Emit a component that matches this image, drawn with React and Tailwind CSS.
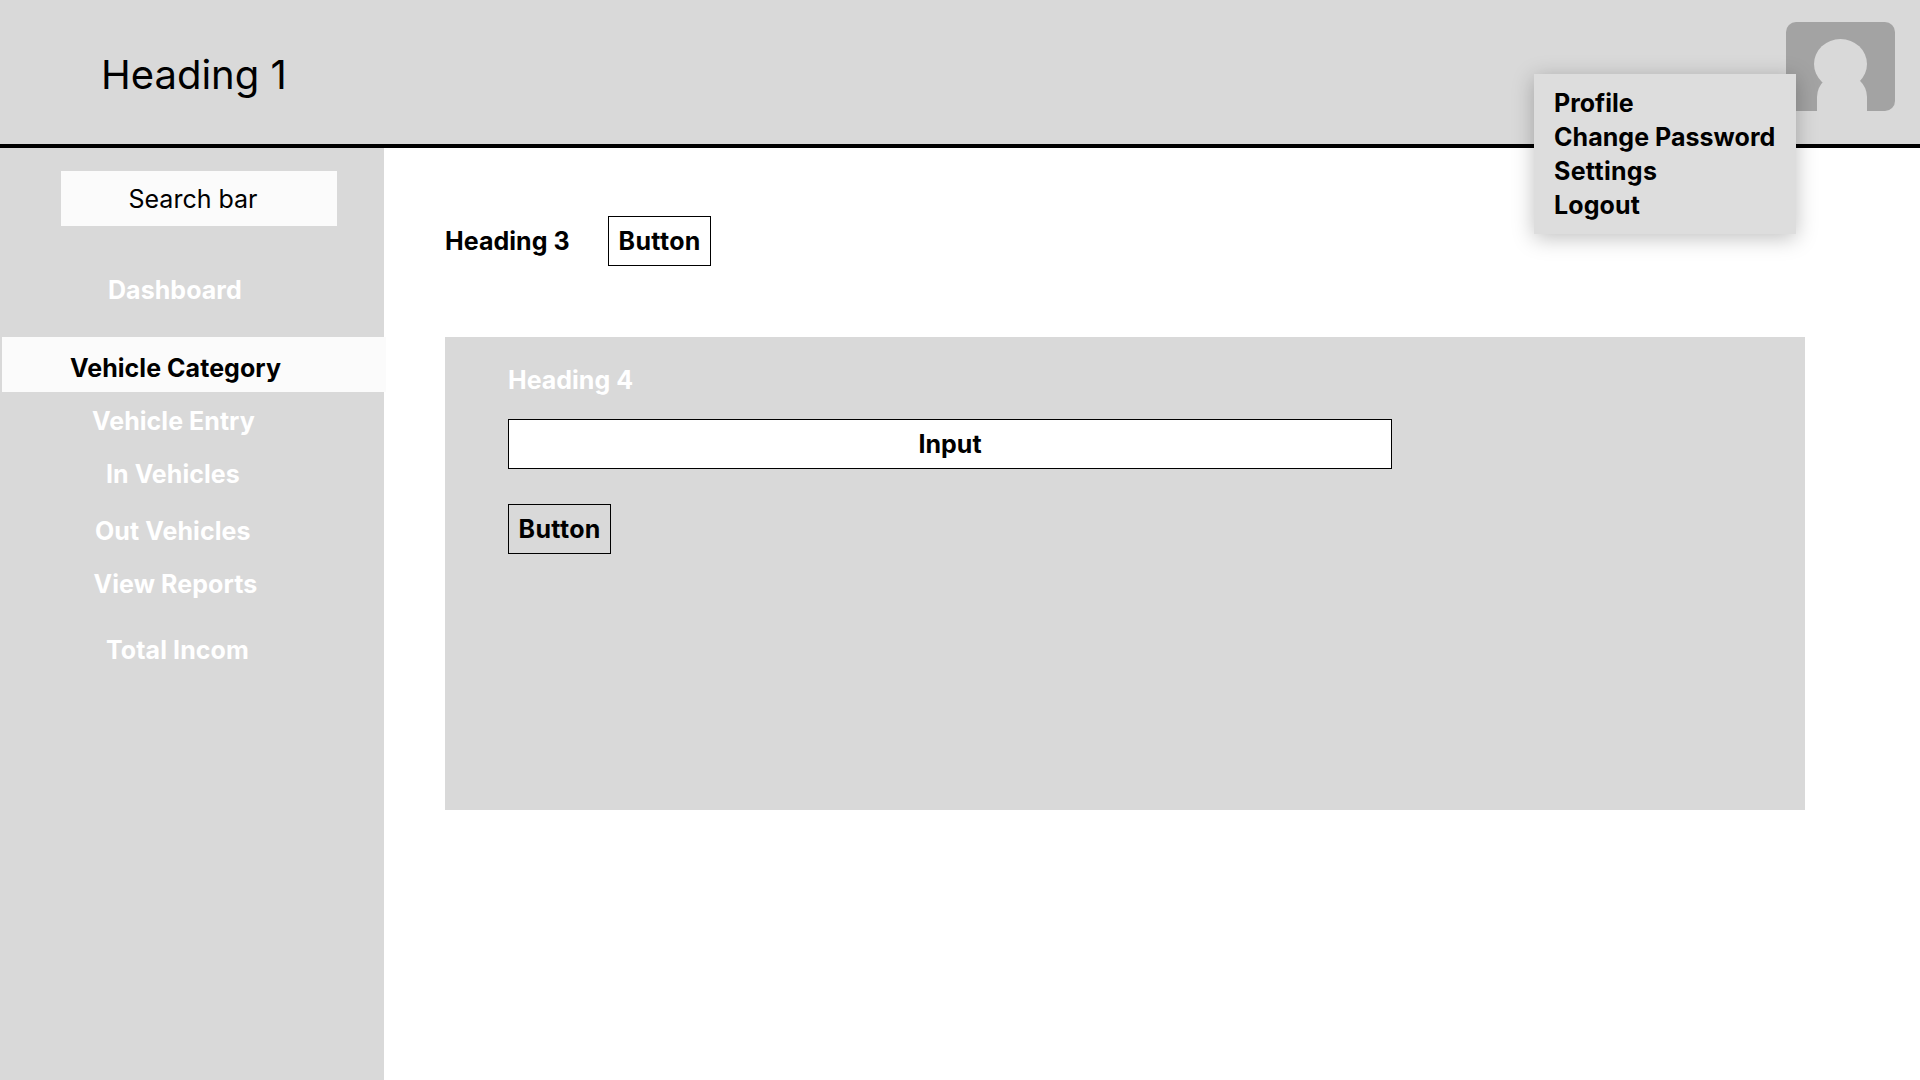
const navItems = [
  { label: 'Dashboard', className: 'mt-[49px] pl-[108px] tracking-[0.05px] text-white' },
  { label: 'Vehicle Category', className: 'mt-8 ml-0.5 -mr-0.5 h-[55px] bg-[#fbfbfb] pt-4 pl-[68px] tracking-[0.05px] text-black' },
  { label: 'Vehicle Entry', className: 'mt-3.5 pl-[92px] tracking-[0.05px] text-white' },
  { label: 'In Vehicles', className: 'mt-[23px] pl-[106px] tracking-[0.05px] text-white' },
  { label: 'Out Vehicles', className: 'mt-[27px] pl-[95px] tracking-[0.08px] text-white' },
  { label: 'View Reports', className: 'mt-[23px] pl-[93.5px] tracking-[0.08px] text-white' },
  { label: 'Total Incom', className: 'mt-9 pl-[106px] tracking-[0.08px] text-white' },
];

const menuItems = [
  { label: 'Profile', className: 'tracking-normal' },
  { label: 'Change Password', className: 'tracking-[0.04px]' },
  { label: 'Settings', className: 'tracking-[0.3px]' },
  { label: 'Logout', className: 'tracking-[0.1px]' },
];

function Avatar() {
  return (
    <svg className="block h-[89px] w-[109px]" viewBox="0 0 109 89" aria-label="Avatar">
      <rect width="109" height="89" rx="10" fill="#a3a3a3" />
      <ellipse cx="54.5" cy="42" rx="26.5" ry="25" fill="#d9d9d9" />
      <path d="M31 89V75a25 23.5 0 0 1 50 0V89Z" fill="#d9d9d9" />
    </svg>
  );
}

function UserMenu() {
  return (
    <ul className="absolute top-[74px] right-[124px] h-40 w-[262px] bg-[#dddddd] py-3 pl-5 leading-[34px] shadow-[0_4px_20px_rgba(0,0,0,0.25)]">
      {menuItems.map((item) => (
        <li key={item.label} className={item.className}>{item.label}</li>
      ))}
    </ul>
  );
}

function Button() {
  return (
    <button className="block h-[50px] w-[103px] border border-black pl-[9.5px] text-left tracking-[0.35px] whitespace-nowrap">Button</button>
  );
}

export default function App() {
  return (
    <div className="relative flex h-[1080px] w-[1920px] flex-col overflow-hidden bg-white font-['Inter',sans-serif] text-[25px] leading-[30px] font-bold text-black">
      <header className="flex h-37 shrink-0 items-start justify-between border-b-4 border-black bg-[#d9d9d9] pt-[22px] pr-[25px] pl-[101px]">
        <h1 className="mt-[29px] text-[40px] leading-[48px] font-normal">Heading 1</h1>
        <Avatar />
      </header>
      <div className="flex flex-1">
        <aside className="w-96 shrink-0 bg-[#d9d9d9] pt-[23px]">
          <div className="ml-[61px] h-[55px] w-[276px] bg-[#fbfbfb] pt-[13px] pl-[67.5px] font-normal">Search bar</div>
          <nav className="flex flex-col whitespace-nowrap">
            {navItems.map((item) => (
              <a key={item.label} className={item.className}>{item.label}</a>
            ))}
          </nav>
        </aside>
        <main className="flex-1 pt-17 pl-[61px]">
          <div className="flex items-center">
            <h3 className="w-[163px] tracking-[0.05px]">Heading 3</h3>
            <Button />
          </div>
          <section className="mt-[71px] h-[473px] w-[1360px] bg-[#d9d9d9] pt-7 pl-[63px]">
            <h4 className="text-white">Heading 4</h4>
            <div className="mt-6 mb-[35px] flex h-[50px] w-[884px] items-center justify-center border border-black bg-white">Input</div>
            <Button />
          </section>
        </main>
      </div>
      <UserMenu />
    </div>
  );
}
